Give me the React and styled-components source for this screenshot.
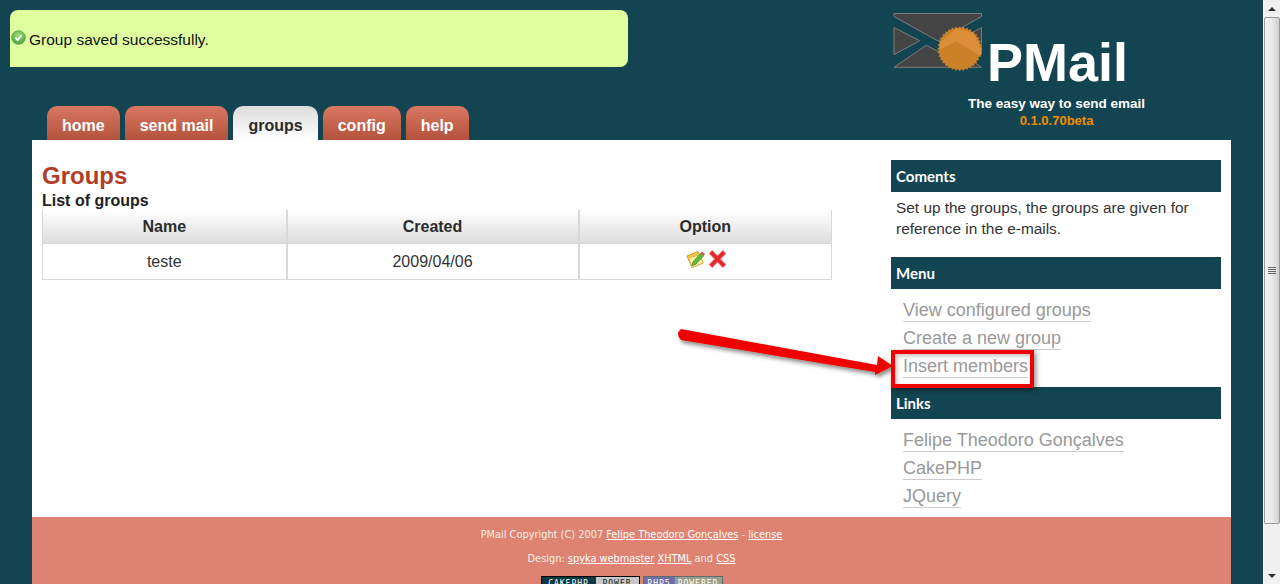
import React from "react";
import styled, { createGlobalStyle } from "styled-components";

const teal = "#134451";

const GlobalStyle = createGlobalStyle`
    html, body {
        margin: 0;
        padding: 0;
        height: 584px;
        overflow: hidden;
        background: ${teal};
    }
    * {
        box-sizing: border-box;
    }
`;

const sealPoints = () => {
    const points = [];
    const teeth = 36;
    for (let i = 0; i < teeth * 2; i++) {
        const radius = i % 2 === 0 ? 22.5 : 20.5;
        const angle = (Math.PI * i) / teeth;
        points.push(`${(66.7 + radius * Math.cos(angle)).toFixed(1)},${(35.7 + radius * Math.sin(angle)).toFixed(1)}`);
    }
    return points.join(" ");
};

const Logo = () => (
    <LogoSvg viewBox="0 0 96 56" width="96" height="56">
        <g fill="#444444" stroke="#7d7d7d" strokeWidth="1" strokeLinejoin="round">
            <polygon points="1,0.5 88.5,0.5 88.5,3.5 45,28 1,3.5" />
            <polygon points="1,14.5 26.7,27.7 1,41.7" />
            <polygon points="88.5,14.5 88.5,41.7 64,28" />
            <polygon points="1,54.3 33.3,32.3 45,38.3 56,32.3 88.5,54.3" />
        </g>
        <polygon points={sealPoints()} fill="#cc8027" />
        <polygon points="46.7,30 63.3,15 80,20 88.3,35 87.7,43.3 63.3,28.3 46.7,36.7" fill="#dc8f38" />
    </LogoSvg>
);

const CheckIcon = () => (
    <NoticeIcon viewBox="0 0 16 16" width="15" height="15">
        <defs>
            <radialGradient id="okFill" cx="50%" cy="35%" r="70%">
                <stop offset="0%" stopColor="#a5e07a" />
                <stop offset="100%" stopColor="#3f9a34" />
            </radialGradient>
        </defs>
        <circle cx="8" cy="8" r="7.3" fill="url(#okFill)" stroke="#5b9d4c" strokeWidth="0.8" />
        <path d="M4.6 8.2 L7 10.6 L11.4 5.8" fill="none" stroke="#fff" strokeWidth="2" />
    </NoticeIcon>
);

const EditIcon = () => (
    <svg viewBox="0 0 20 18" width="20" height="18">
        <path d="M1 6 L12 1.5 L17 13 L6 17.5 Z" fill="#f3c84a" stroke="#c9962c" strokeWidth="1" strokeLinejoin="round" />
        <path d="M2.5 8 L14 4.5 L17 13 L6 17.5 Z" fill="#fdf0a0" stroke="#d9ab3a" strokeWidth="0.8" strokeLinejoin="round" />
        <path d="M6.5 12.5 L14.5 3.5 L17.5 6 L9.5 14.5 L6 15.5 Z" fill="#62bb3c" stroke="#3a8a24" strokeWidth="0.7" strokeLinejoin="round" />
        <path d="M14.5 3.5 L16 1.5 L19 4 L17.5 6 Z" fill="#d9534a" />
    </svg>
);

const DeleteIcon = () => (
    <svg viewBox="0 0 17 18" width="17" height="18">
        <g fill="none" strokeLinecap="square">
            <path d="M3.2 3.5 L13.8 14.5 M13.8 3.5 L3.2 14.5" stroke="#f2787c" strokeWidth="5" />
            <path d="M3.2 3.5 L13.8 14.5 M13.8 3.5 L3.2 14.5" stroke="#e4262d" strokeWidth="3.4" />
        </g>
    </svg>
);

const Arrow = () => (
    <ArrowSvg viewBox="0 0 220 50" width="220" height="50">
        <defs>
            <filter id="arrowShadow" x="-5%" y="-30%" width="110%" height="170%">
                <feDropShadow dx="2" dy="3" stdDeviation="2" floodColor="#000" floodOpacity="0.45" />
            </filter>
        </defs>
        <path
            d="M3 1 L199 37 L200 28 L215 38 L197 47 L197 44 L3 12 Q-3 6 3 1 Z"
            fill="#f00000"
            filter="url(#arrowShadow)"
        />
    </ArrowSvg>
);

const App = () => {
    const tabs = ["home", "send mail", "groups", "config", "help"];
    const menu = ["View configured groups", "Create a new group", "Insert members"];
    const links = ["Felipe Theodoro Gonçalves", "CakePHP", "JQuery"];

    return (
        <Screen>
            <GlobalStyle />
            <Page>
                <Header>
                    <HeaderLeft>
                        <Notice>
                            <CheckIcon />
                            <NoticeText>Group saved successfully.</NoticeText>
                        </Notice>
                        <Tabs>
                            {tabs.map((tab) => (
                                <Tab key={tab} $active={tab === "groups"}>{tab}</Tab>
                            ))}
                        </Tabs>
                    </HeaderLeft>
                    <Brand>
                        <Logo />
                        <BrandName>PMail</BrandName>
                        <Tagline>The easy way to send email</Tagline>
                        <Version>0.1.0.70beta</Version>
                    </Brand>
                </Header>

                <Wrapper>
                    <Columns>
                        <Main>
                            <PageTitle>Groups</PageTitle>
                            <SubTitle>List of groups</SubTitle>
                            <Table>
                                <thead>
                                    <tr>
                                        <HeadCell $width={244}>Name</HeadCell>
                                        <HeadCell $width={292}>Created</HeadCell>
                                        <HeadCell $width={253}>Option</HeadCell>
                                    </tr>
                                </thead>
                                <tbody>
                                    <tr>
                                        <Cell>teste</Cell>
                                        <Cell>2009/04/06</Cell>
                                        <Cell>
                                            <OptionIcons>
                                                <EditIcon />
                                                <DeleteIcon />
                                            </OptionIcons>
                                        </Cell>
                                    </tr>
                                </tbody>
                            </Table>
                        </Main>
                        <Sidebar>
                            <SideHeading>Coments</SideHeading>
                            <SideText>Set up the groups, the groups are given for reference in the e-mails.</SideText>
                            <SideHeading>Menu</SideHeading>
                            <LinkList>
                                {menu.map((item) => (
                                    <LinkRow key={item}><SideLink>{item}</SideLink></LinkRow>
                                ))}
                            </LinkList>
                            <SideHeading>Links</SideHeading>
                            <LinkList>
                                {links.map((item) => (
                                    <LinkRow key={item}><SideLink>{item}</SideLink></LinkRow>
                                ))}
                            </LinkList>
                        </Sidebar>
                    </Columns>
                    <Footer>
                        <FooterLine>
                            PMail Copyright (C) 2007 <FooterLink>Felipe Theodoro Gonçalves</FooterLink> - <FooterLink>license</FooterLink>
                        </FooterLine>
                        <FooterLine>
                            Design: <FooterLink>spyka webmaster</FooterLink> <FooterLink>XHTML</FooterLink> and <FooterLink>CSS</FooterLink>
                        </FooterLine>
                        <Badges>
                            <Badge $border="#000" $width={99}>
                                <BadgeLabel $bg="#0c3a44" $color="#fff" $width={54}>CAKEPHP</BadgeLabel>
                                <BadgeLabel $bg="#c8c8c8" $color="#222" $width={43}>POWER</BadgeLabel>
                            </Badge>
                            <Badge $border="#5d6d6d" $width={80}>
                                <BadgeLabel $bg="#6f6fa8" $color="#fff" $width={31}>PHP5</BadgeLabel>
                                <BadgeLabel $bg="#9aa08c" $color="#fff" $width={47}>POWERED</BadgeLabel>
                            </Badge>
                        </Badges>
                    </Footer>
                </Wrapper>

                <Arrow />
                <Callout />
            </Page>
            <Scrollbar>
                <ScrollButton>
                    <ArrowGlyph $up />
                </ScrollButton>
                <ScrollThumb>
                    <ThumbGrip />
                </ScrollThumb>
                <ScrollTrack />
                <ScrollButton>
                    <ArrowGlyph />
                </ScrollButton>
            </Scrollbar>
        </Screen>
    );
};

export default App;

const Screen = styled.div`
    width: 1280px;
    height: 584px;
    display: flex;
    overflow: hidden;
    font-family: "Liberation Sans", Arial, sans-serif;
`;

const Page = styled.div`
    position: relative;
    flex: 1;
    min-width: 0;
    background: ${teal};
    overflow: hidden;
`;

const Header = styled.header`
    height: 140px;
    display: flex;
`;

const HeaderLeft = styled.div`
    width: 628px;
    padding: 10px 0 0 10px;
`;

const Notice = styled.div`
    height: 57px;
    display: flex;
    align-items: flex-start;
    gap: 3px;
    padding: 20px 0 0 1px;
    background: #dfff9f;
    border-radius: 8px 8px 8px 0;
    color: #111;
    font-size: 15.5px;
`;

const NoticeIcon = styled.svg`
    display: block;
`;

const NoticeText = styled.span`
    margin-top: 1px;
    line-height: 18px;
`;

const Tabs = styled.nav`
    display: flex;
    gap: 5px;
    margin: 39px 0 0 37px;
`;

const Tab = styled.a`
    height: 34px;
    padding: 6px 15px 0;
    display: flex;
    align-items: center;
    border-radius: 10px 10px 0 0;
    font-size: 16px;
    font-weight: bold;
    color: ${({ $active }) => ($active ? "#2b2b2b" : "#fff")};
    background: ${({ $active }) =>
        $active
            ? "linear-gradient(#dcdcdc, #ffffff)"
            : "linear-gradient(#d97762, #b4533c)"};
`;

const Brand = styled.div`
    position: relative;
    width: 327px;
    margin-left: 265px;
    padding-top: 13px;
`;

const LogoSvg = styled.svg`
    display: block;
    overflow: visible;
`;

const BrandName = styled.div`
    position: absolute;
    left: 94px;
    top: 31px;
    font-size: 54px;
    line-height: 62px;
    font-weight: bold;
    color: #fff;
`;

const Tagline = styled.div`
    margin: 26px 0 0 0;
    width: 327px;
    text-align: center;
    font-size: 13.5px;
    line-height: 17px;
    font-weight: bold;
    color: #fff;
`;

const Version = styled(Tagline)`
    margin-top: 0;
    font-size: 13px;
    color: #f28c00;
`;

const Wrapper = styled.div`
    width: 1199px;
    margin-left: 32px;
    background: #fff;
`;

const Columns = styled.div`
    height: 377px;
    display: flex;
    justify-content: space-between;
    padding: 20px 10px 0;
`;

const Main = styled.main`
    width: 790px;
`;

const PageTitle = styled.h1`
    margin: 0;
    font-size: 24px;
    line-height: 32px;
    font-weight: bold;
    color: #b23c26;
`;

const SubTitle = styled.h2`
    margin: 0;
    font-size: 16px;
    line-height: 18px;
    font-weight: bold;
    color: #222;
`;

const Table = styled.table`
    width: 789px;
    table-layout: fixed;
    border-collapse: collapse;
    font-size: 16px;
    color: #333;
`;

const HeadCell = styled.th`
    width: ${({ $width }) => $width}px;
    height: 33px;
    padding: 2px 0 0;
    text-align: center;
    font-weight: bold;
    color: #2b2b2b;
    background: linear-gradient(#ffffff, #dcdcdc);
    border-left: 1px solid #d8d8d8;
    border-right: 1px solid #d8d8d8;

    & + & {
        border-left-width: 2px;
    }
`;

const Cell = styled.td`
    height: 36px;
    padding: 2px 0 0;
    text-align: center;
    border: 1px solid #d8d8d8;

    & + & {
        border-left-width: 2px;
    }
`;

const OptionIcons = styled.div`
    display: flex;
    justify-content: center;
    align-items: center;
    gap: 3px;
    padding: 0 0 6px 2px;
`;

const Sidebar = styled.aside`
    width: 330px;
`;

const SideHeading = styled.h3`
    margin: 0;
    height: 32px;
    padding: 0 5px;
    display: flex;
    align-items: center;
    background: ${teal};
    color: #fff;
    font-family: Lato, "Open Sans", sans-serif;
    font-size: 15px;
    font-weight: bold;
`;

const SideText = styled.p`
    margin: 0;
    height: 65px;
    padding: 5px 5px 0;
    font-size: 15.4px;
    line-height: 21px;
    color: #333;
`;

const LinkList = styled.ul`
    list-style: none;
    margin: 0;
    padding: 7px 0 7px 12px;
`;

const LinkRow = styled.li`
    height: 28px;
    line-height: 28px;
`;

const SideLink = styled.a`
    font-size: 18px;
    color: #999;
    border-bottom: 1px solid #ccc;
    padding-bottom: 1px;
`;

const Footer = styled.footer`
    height: 67px;
    overflow: hidden;
    padding-top: 1px;
    background: #de8371;
    text-align: center;
    color: #fbeeea;
    font-family: "DejaVu Sans", Verdana, sans-serif;
    font-size: 9.8px;
`;

const FooterLine = styled.p`
    margin: 0;
    padding-top: 10px;
    height: 24px;
    line-height: 14px;
`;

const FooterLink = styled.a`
    color: #fff;
    text-decoration: underline;
`;

const Badges = styled.div`
    display: flex;
    justify-content: center;
    gap: 3px;
    margin: 10px 0 0 0;
`;

const Badge = styled.div`
    width: ${({ $width }) => $width}px;
    height: 15px;
    display: flex;
    border: 1px solid ${({ $border }) => $border};
`;

const BadgeLabel = styled.span`
    width: ${({ $width }) => $width}px;
    background: ${({ $bg }) => $bg};
    color: ${({ $color }) => $color};
    font-family: "DejaVu Sans Mono", monospace;
    font-size: 8px;
    line-height: 14px;
    letter-spacing: 1px;
    text-align: center;
    white-space: nowrap;
    overflow: hidden;
`;

const ArrowSvg = styled.svg`
    position: absolute;
    left: 678px;
    top: 328px;
    overflow: visible;
`;

const Callout = styled.div`
    position: absolute;
    left: 891px;
    top: 350px;
    width: 143px;
    height: 38px;
    border: 4px solid #f00000;
    box-shadow: 2px 2px 5px rgba(0, 0, 0, 0.45), inset 2px 2px 4px rgba(0, 0, 0, 0.25);
`;

const Scrollbar = styled.div`
    width: 17px;
    display: flex;
    flex-direction: column;
    background: #f0f0f0;
    border-left: 1px solid #fff;
`;

const ScrollButton = styled.div`
    height: 17px;
    display: flex;
    align-items: center;
    justify-content: center;
`;

const ArrowGlyph = styled.div`
    width: 0;
    height: 0;
    border-left: 4px solid transparent;
    border-right: 4px solid transparent;
    border-top: ${({ $up }) => ($up ? "0" : "4px solid #333")};
    border-bottom: ${({ $up }) => ($up ? "4px solid #333" : "0")};
`;

const ScrollThumb = styled.div`
    height: 507px;
    display: flex;
    align-items: center;
    justify-content: center;
    border: 1px solid #9a9a9a;
    border-radius: 2px;
    background: linear-gradient(90deg, #f4f4f4, #ececec 45%, #cfcfd2);
`;

const ThumbGrip = styled.div`
    width: 8px;
    height: 8px;
    background: repeating-linear-gradient(#666 0 1px, transparent 1px 2px);
`;

const ScrollTrack = styled.div`
    flex: 1;
`;
